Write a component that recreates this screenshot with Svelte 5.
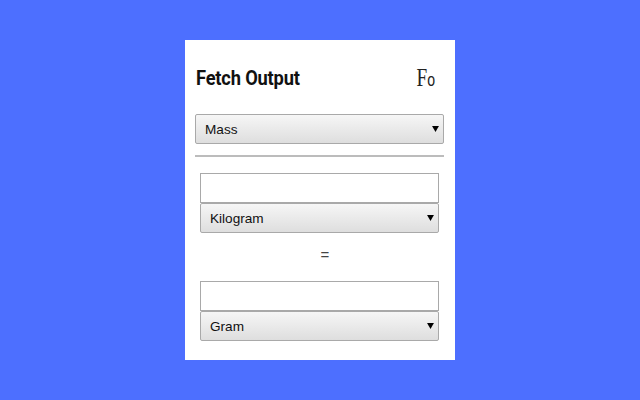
<script>
	let category = $state('Mass')
	let fromUnit = $state('Kilogram')
	let toUnit = $state('Gram')
</script>

{#snippet picker(options, value, onchange)}
	<div class="picker">
		<select {value} onchange={e => onchange(e.target.value)}>
			{#each options as option}
				<option>{option}</option>
			{/each}
		</select>
		<svg class="arrow" viewBox="0 0 8 7" aria-hidden="true"><path d="M0 0H8L4 7Z" /></svg>
	</div>
{/snippet}

<main>
	<section class="card">
		<header>
			<h1>Fetch Output</h1>
			<span class="logo">F<small>o</small></span>
		</header>

		{@render picker(['Mass', 'Length', 'Volume'], category, v => (category = v))}
		<hr />

		<div class="converter">
			<div class="field">
				<input type="text" />
				{@render picker(['Kilogram', 'Gram', 'Pound'], fromUnit, v => (fromUnit = v))}
			</div>
			<div class="equals">=</div>
			<div class="field">
				<input type="text" />
				{@render picker(['Gram', 'Kilogram', 'Pound'], toUnit, v => (toUnit = v))}
			</div>
		</div>
	</section>
</main>

<style>
	:global(body) {
		background: #4d6fff;
		font-family: "Liberation Sans", Arial, sans-serif;
	}

	main {
		height: 400px;
		display: flex;
		justify-content: center;
		padding-top: 40px;
		box-sizing: border-box;
	}

	.card {
		width: 270px;
		height: 320px;
		box-sizing: border-box;
		background: #fff;
		padding: 0 11px 0 10px;
	}

	header {
		height: 74px;
		display: flex;
		align-items: center;
		justify-content: space-between;
		padding: 2px 9px 0 1px;
		box-sizing: border-box;
	}

	h1 {
		margin: 0;
		font-family: "Roboto", sans-serif;
		font-size: 21px;
		font-weight: 700;
		letter-spacing: -0.2px;
		color: #111;
		white-space: nowrap;
		transform: scaleX(0.87);
		transform-origin: left center;
	}

	.logo {
		font-family: "Liberation Serif", serif;
		font-size: 26px;
		line-height: 1;
		color: #222;
		transform: scaleX(0.74);
		transform-origin: right center;
	}

	.logo small {
		font-family: "Liberation Sans", sans-serif;
		font-size: 19px;
	}

	.picker {
		position: relative;
		height: 30px;
	}

	select {
		display: block;
		width: 100%;
		height: 100%;
		appearance: none;
		margin: 0;
		padding: 0 0 0 9px;
		border: 1px solid #a9a9a9;
		border-radius: 2px;
		background: linear-gradient(#f6f6f6, #dedede);
		font-family: inherit;
		font-size: 13.6px;
		color: #111;
		outline: none;
	}

	.arrow {
		position: absolute;
		right: 5px;
		top: 12px;
		width: 7px;
		height: 6px;
		pointer-events: none;
	}

	hr {
		height: 2px;
		margin: 11px 0 16px;
		border: 0;
		background: #bcbcbc;
	}

	.converter {
		padding: 0 5px;
	}

	.field {
		display: flex;
		flex-direction: column;
	}

	input {
		height: 30px;
		box-sizing: border-box;
		width: 100%;
		margin: 0;
		border: 1px solid #a9a9a9;
		background: #fff;
		outline: none;
	}

	.equals {
		height: 48px;
		display: flex;
		align-items: center;
		justify-content: center;
		padding: 0 0 5px 11px;
		box-sizing: border-box;
		font-size: 15px;
		color: #444;
	}
</style>
